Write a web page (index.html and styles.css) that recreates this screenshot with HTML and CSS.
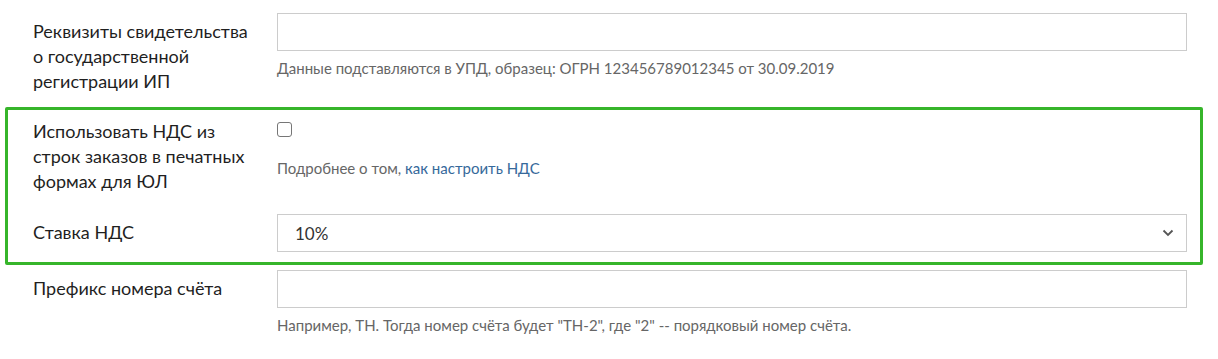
FILE: index.html
```html
<!DOCTYPE html>
<html lang="ru">
<head>
  <meta charset="UTF-8" />
  <title>Настройки реквизитов</title>
  <link rel="stylesheet" href="styles.css">
</head>
<body>
  <div class="form">
    <div class="group">
      <div class="row">
        <label class="row-label">Реквизиты свидетельства о государственной регистрации ИП</label>
        <div class="row-control">
          <input class="field" type="text">
          <div class="help">Данные подставляются в УПД, образец: ОГРН 123456789012345 от 30.09.2019</div>
        </div>
      </div>
    </div>

    <div class="group highlight">
      <div class="row">
        <label class="row-label">Использовать НДС из строк заказов в печатных формах для ЮЛ</label>
        <div class="row-control">
          <span class="check"></span>
          <div class="help help-check">Подробнее о том, <a href="#">как настроить НДС</a></div>
        </div>
      </div>
      <div class="row row-select">
        <label class="row-label">Ставка НДС</label>
        <div class="row-control">
          <div class="select">
            <span>10%</span>
            <svg width="12" height="8" viewBox="0 0 12 8"><path d="M1.5 1.5 L6 6 L10.5 1.5" fill="none" stroke="#555" stroke-width="1.8"/></svg>
          </div>
        </div>
      </div>
    </div>

    <div class="group group-last">
      <div class="row">
        <label class="row-label">Префикс номера счёта</label>
        <div class="row-control">
          <input class="field" type="text">
          <div class="help">Например, ТН. Тогда номер счёта будет "ТН-2", где "2" -- порядковый номер счёта.</div>
        </div>
      </div>
    </div>
  </div>
</body>
</html>
```

FILE: styles.css
```css
body {
  margin: 0;
  background: #ffffff;
  font-family: Lato, 'Open Sans', sans-serif;
  color: #222222;
}

.form {
  width: 1198px;
  padding: 13px 0 0 5px;
}

.group {
  border: 3px solid transparent;
  border-top: 0;
  border-bottom: 0;
  margin-bottom: 13px;
}

.group.highlight {
  border: 3px solid #36b52a;
  border-radius: 2px;
  padding: 3px 0 10px;
  margin-bottom: 5px;
}

.row {
  display: grid;
  grid-template-columns: 244px 910px;
  padding-left: 25px;
}

.row-select {
  margin-top: 20px;
}

.row-label {
  padding: 6px 22px 0 0;
  font-size: 18px;
  line-height: 25px;
  color: #1f1f1f;
}

.field {
  display: block;
  box-sizing: border-box;
  width: 100%;
  height: 38px;
  margin: 0;
  border: 1px solid #cccccc;
  border-radius: 0;
  background: #fff;
}

.help {
  margin-top: 7px;
  font-size: 15px;
  line-height: 20px;
  color: #666666;
}

.help a {
  color: #36699b;
  text-decoration: none;
}

.check {
  display: block;
  width: 13px;
  height: 13px;
  margin-top: 9px;
  border: 1px solid #767676;
  border-radius: 3px;
}

.help-check {
  margin-top: 21px;
}

.select {
  box-sizing: border-box;
  height: 38px;
  border: 1px solid #cccccc;
  display: flex;
  align-items: center;
  justify-content: space-between;
  padding: 0 12px 0 17px;
  font-size: 17px;
  color: #333333;
}
```
